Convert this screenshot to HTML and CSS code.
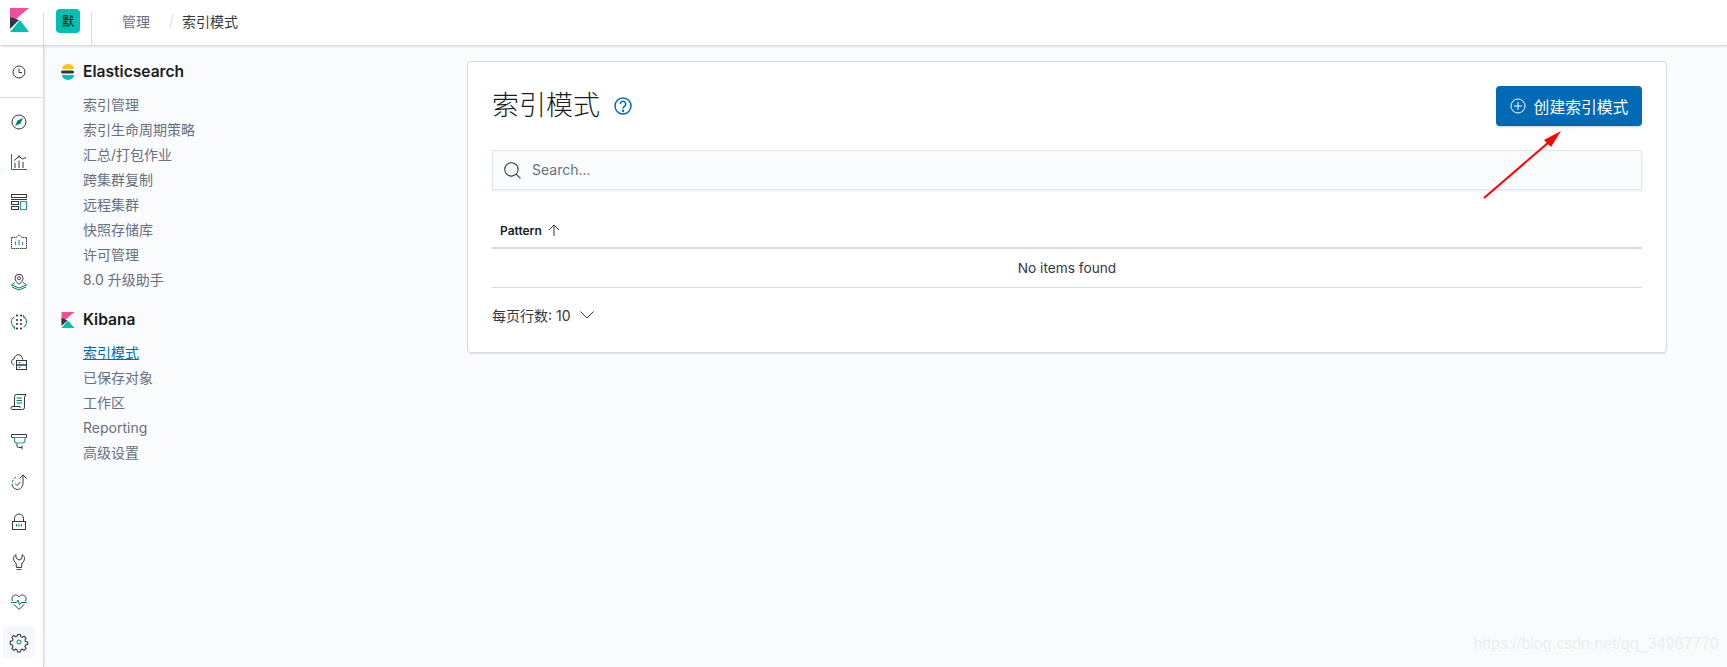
FILE: index.html
```html
<!DOCTYPE html>
<html lang="zh">
<head>
<meta charset="utf-8">
<title>索引模式</title>
<link rel="stylesheet" href="styles.css">
</head>
<body>
<header class="topbar">
  <div class="logo-cell">
    <svg class="logo" viewBox="0 0 19 24" width="19" height="24"><path d="M0 0H19L0 16Z" fill="#f04e98"/><path d="M0 9 9 12 0 21Z" fill="#343741"/><path d="M10 12 19 24H0Z" fill="#00bfb3"/></svg>
  </div>
  <div class="space-cell"><span class="space-badge">默</span></div>
  <nav class="crumbs"><span class="crumb">管理</span><span class="crumb-sep"></span><span class="crumb-current">索引模式</span></nav>
</header>
<div class="body">
  <aside class="rail">
    <div class="rail-recent">
      <svg class="ri" viewBox="0 0 16 16"><circle cx="8" cy="8" r="6" class="d"/><path d="M8 4.500v4h3" class="d"/></svg>
    </div>
    <div class="rail-list">
      <span class="rail-item"><svg class="ri" viewBox="0 0 16 16"><circle cx="8" cy="8" r="7" class="d"/><path d="M12 4 9.500 9.500 4 12 6.500 6.500Z" class="tf"/></svg></span>
      <span class="rail-item"><svg class="ri" viewBox="0 0 16 16"><path d="M.5 0v15.500H16" class="t"/><path d="M3 6.500 8 2.500l3.500 2.500L15 3.500" class="d"/><circle cx="8" cy="2.500" r="1" class="dots"/><path d="M4 14V9M8 14V6.500M12 14V8" class="d"/></svg></span>
      <span class="rail-item"><svg class="ri" viewBox="0 0 16 16"><rect x=".5" y=".5" width="15" height="3" class="d"/><path d="M0 5.500h16" class="d"/><rect x=".5" y="7.500" width="7" height="3" class="d"/><rect x=".5" y="12.500" width="7" height="3" class="d"/><rect x="9.500" y="7.500" width="6" height="8" class="t2"/></svg></span>
      <span class="rail-item"><svg class="ri" viewBox="0 0 16 16"><path d="M.5 3.500h4.500L8 .8l3 2.700h4.500v11H.5Z" class="d" stroke-dasharray="1.600 .6"/><path d="M4.500 11V7.500M8 11V6M11.500 11V8" class="t2"/></svg></span>
      <span class="rail-item"><svg class="ri" viewBox="0 0 16 16"><path d="M8 10.500C6 8.500 4 6.500 4 4.300a4 4 0 0 1 8 0C12 6.500 10 8.500 8 10.500Z" class="d"/><circle cx="8" cy="4.300" r="1.500" class="d"/><path d="M4 8.500 .5 11 8 14l7.500-3L12 8.500M1 13l7 3 7-3" class="t"/></svg></span>
      <span class="rail-item"><svg class="ri" viewBox="0 0 16 16"><path d="M3.500 3C1 4 .5 6 .5 8s.8 4 3 5" class="t"/><path d="M12.500 3c2.500 1 3 3 3 5s-.8 4-3 5" class="t"/><path d="M1.500 12.800 3.800 13 3.500 15M14.500 3.200 12.300 3l.3-2" class="t"/><g class="dots"><circle cx="6" cy="1.500" r="1.100"/><circle cx="10" cy="1.500" r="1.100"/><circle cx="6" cy="6" r="1.100"/><circle cx="10" cy="6" r="1.100"/><circle cx="6" cy="10" r="1.100"/><circle cx="10" cy="10" r="1.100"/><circle cx="6" cy="14.500" r="1.100"/><circle cx="10" cy="14.500" r="1.100"/></g></svg></span>
      <span class="rail-item"><svg class="ri" viewBox="0 0 16 16"><path d="M3 11C1 10.500.5 9 .5 7.800.5 6.300 1.500 5 3 5c.5-2.800 2.500-4.300 4.500-4.300S11 2 11.800 5.500" class="d"/><rect x="5.500" y="6.500" width="10" height="4.500" class="d"/><rect x="5.500" y="11" width="10" height="4.500" class="d"/><path d="M7.500 8.700h2M7.500 13.200h2" class="t"/></svg></span>
      <span class="rail-item"><svg class="ri" viewBox="0 0 16 16"><path d="M3.500 13V2.500a2 2 0 0 1 2-2H15l-1.500 2.500v10.500a2 2 0 0 1-2 2h-9.500A1.500 1.500 0 0 1 1 12.500h8V14" class="d"/><path d="M5.500 4h5.500M5.500 6.500h5.500M5.500 9h5.500" class="t"/></svg></span>
      <span class="rail-item"><svg class="ri" viewBox="0 0 16 16"><path d="M.5 3V.5h15V3M3.500 3.500H.5M15.500 3.500h-3" class="d"/><path d="M3.500 3.500h10.500V6.500a2.500 2.500 0 0 1-2.500 2.500H6A2.500 2.500 0 0 1 3.500 6.500Z" class="t2"/><path d="M6 9.500v2.500a1.500 1.500 0 0 0 1.500 1.500h3.500M11 11.500V15.500" class="d"/></svg></span>
      <span class="rail-item"><svg class="ri" viewBox="0 0 16 16"><path d="M1.500 8.500a5.500 5.500 0 0 1 5-5.500" class="t" stroke-dasharray="2.500 1.300"/><path d="M1 10c0 3 2.500 5.500 5.500 5.500S12 13 12 9V1" class="d"/><path d="M8.500 4.500 12 .8l3.500 3.700M4 9.500l2 2 3.500-3.500" class="d"/></svg></span>
      <span class="rail-item"><svg class="ri" viewBox="0 0 16 16"><path d="M3.500 7V4.500a4.500 4.500 0 0 1 9 0V7" class="d"/><rect x="1.500" y="7.500" width="13" height="8" class="d"/><path d="M5.500 10v2.500M8 10v3M10.500 10v2.500" class="t"/></svg></span>
      <span class="rail-item"><svg class="ri" viewBox="0 0 16 16"><path d="M5 .8C3 1.500 2.500 3 2.500 4.500c0 2 1.200 3.500 2.500 4.500l.5 4.500h5l.5-4.500c1.300-1 2.500-2.500 2.500-4.500 0-1.500-.5-3-2.500-3.700v3.700L8 6 5 4Z" class="d"/><path d="M5.500 15.500h5" class="t"/></svg></span>
      <span class="rail-item"><svg class="ri" viewBox="0 0 16 16"><path d="M1.500 7C0 4 2 1 4.500 1c1.500 0 2.800.8 3.500 2 .7-1.200 2-2 3.500-2C14 1 16 4 14.500 7M3 10.500l5 5 5-5" class="d"/><path d="M0 8.500h5.500L7 6l1.500 5L10 8.500h6" class="t"/></svg></span>
      <span class="rail-item rail-item-active"><svg class="ri" viewBox="0 0 16 16"><path d="M6.700 1h2.600l.4 2 1.500.6 1.700-1.100 1.800 1.800-1.100 1.700.6 1.500 2 .4v2.600l-2 .4-.6 1.500 1.100 1.700-1.800 1.800-1.700-1.100-1.500.6-.4 2H6.700l-.4-2-1.500-.6-1.700 1.100-1.800-1.800 1.100-1.700-.6-1.500-2-.4V7.300l2-.4.6-1.500L1.300 3.700l1.800-1.800 1.700 1.100 1.500-.6Z" class="d" transform="translate(-.5 -.5) scale(1.060)"/><circle cx="8" cy="8" r="2" class="t"/></svg></span>
    </div>
  </aside>
  <aside class="sidenav">
    <h2 class="group-title">
      <svg class="group-icon" viewBox="0 0 16 16"><path d="M2 5a6 5 0 0 1 12 0Z" fill="#fec514"/><rect x="1" y="6.500" width="13" height="3" rx="1.500" fill="#343741"/><path d="M2 11h12a6 5 0 0 1-12 0Z" fill="#00bfb3"/></svg>
      Elasticsearch</h2>
    <ul class="links">
      <li>索引管理</li><li>索引生命周期策略</li><li>汇总/打包作业</li><li>跨集群复制</li><li>远程集群</li><li>快照存储库</li><li>许可管理</li><li>8.0 升级助手</li>
    </ul>
    <h2 class="group-title group-second">
      <svg class="group-icon" viewBox="0 0 13 16"><path d="M0 0H13L0 11Z" fill="#f04e98"/><path d="M0 6 6 8.500 0 14Z" fill="#343741"/><path d="M6.500 8.500 13 16H0Z" fill="#00bfb3"/></svg>
      Kibana</h2>
    <ul class="links">
      <li class="link-active">索引模式</li><li>已保存对象</li><li>工作区</li><li>Reporting</li><li>高级设置</li>
    </ul>
  </aside>
  <main class="main">
    <section class="panel">
      <div class="panel-head">
        <div class="title-wrap">
          <h1 class="title">索引模式</h1>
          <svg class="help" viewBox="0 0 18 18"><circle cx="9" cy="9" r="8" /><path d="M6.300 7a2.700 2.700 0 1 1 4.200 2.300C9.500 10 9 10.300 9 11.500"/><circle cx="9" cy="13.700" r=".5"/></svg>
        </div>
        <button class="create-btn"><svg class="plus" viewBox="0 0 16 16"><circle cx="8" cy="8" r="7"/><path d="M8 4v8M4 8h8"/></svg>创建索引模式</button>
      </div>
      <div class="search">
        <svg class="search-icon" viewBox="0 0 16 16"><circle cx="7" cy="7" r="6.300"/><path d="M11.500 11.500 15.500 15.500"/></svg>
        <span class="search-ph">Search...</span>
      </div>
      <div class="th"><span class="th-label">Pattern</span><svg class="sort" viewBox="0 0 12 12"><path d="M6 12V1M1 6l5-5 5 5"/></svg></div>
      <div class="empty">No items found</div>
      <div class="pager">每页行数: 10<svg class="chev" viewBox="0 0 14 8"><path d="M.5.500 7 7 13.500.5"/></svg></div>
    </section>
  </main>
</div>
<svg class="arrow" viewBox="0 0 90 80" width="90" height="80"><path d="M3 77 68 21" stroke="#f00" stroke-width="2" fill="none"/><path d="M80 10 63 19 70 26Z" fill="#f00"/></svg>
<div class="watermark">https://blog.csdn.net/qq_34967770</div>
</body>
</html>
```
FILE: styles.css
```css
* { box-sizing: border-box; }
html, body { margin: 0; height: 100%; }
body {
  font-family: Inter, "Noto Sans CJK SC", sans-serif;
  font-size: 14px;
  color: #343741;
  background: #fafbfd;
  position: relative;
  overflow: hidden;
  height: 667px;
}
.topbar {
  height: 46px;
  display: flex;
  align-items: center;
  background: #fff;
  border-bottom: 1px solid #d3dae6;
  box-shadow: 0 2px 2px -1px rgba(152, 162, 179, .3);
  position: relative;
  z-index: 2;
}
.logo-cell { width: 44px; height: 46px; display: flex; padding: 8px 0 0 10px; position: relative; }
.logo-cell::after { content: ""; position: absolute; right: 0; top: 13px; height: 32px; width: 1px; background: #d3dae6; }
.logo { display: block; }
.space-cell { width: 48px; height: 46px; padding: 9px 0 0 12px; position: relative; }
.space-cell::after { content: ""; position: absolute; right: 0; top: 13px; height: 32px; width: 1px; background: #d3dae6; }
.space-badge {
  display: flex; width: 24px; height: 24px; border-radius: 4px;
  background: #00bfb3; color: #000; font-size: 12px;
  align-items: center; justify-content: center;
}
.crumbs { display: flex; align-items: center; padding: 0 0 3px 30px; font-size: 14px; height: 44px; }
.crumb { color: #69707d; }
.crumb-sep { width: 1px; height: 14px; background: #d3dae6; transform: rotate(15deg); margin: 0 10px 0 21px; }
.crumb-current { color: #343741; }
.body { display: flex; height: 621px; }
.rail {
  width: 44px; flex: none; background: #fff;
  border-right: 1px solid #d3dae6;
  box-shadow: 1px 0 2px rgba(152, 162, 179, .2);
  display: flex; flex-direction: column;
}
.rail-recent { height: 52px; display: flex; align-items: center; justify-content: center; border-bottom: 1px solid #d3dae6; padding: 0 5px 0 0; }
.rail-list { display: flex; flex-direction: column; align-items: center; padding: 4px 5px 0 0; }
.rail-item { width: 32px; height: 40px; display: flex; align-items: center; justify-content: center; }
.rail-item-active { height: 32px; margin-top: 4px; background: #f5f7fa; border-radius: 4px; }
.ri { width: 16px; height: 16px; display: block; overflow: visible; }
.ri .d { fill: none; stroke: #343741; stroke-width: 1; }
.ri .t { fill: none; stroke: #017d73; stroke-width: 1; }
.ri .t2 { fill: none; stroke: #2a9d92; stroke-width: 1.200; }
.ri .tf { fill: #017d73; stroke: none; }
.ri .dots { fill: #343741; }
.sidenav { width: 423px; flex: none; padding: 14px 0 0 16px; }
.group-title { margin: 0; display: flex; align-items: center; font-size: 15.600px; font-weight: 600; color: #1a1c21; height: 24px; line-height: 24px; margin-bottom: 8px; }
.group-second { margin-top: 16px; margin-bottom: 8px; }
.group-icon { width: 16px; height: 16px; margin-right: 7px; flex: none; }
.links { list-style: none; margin: 0; padding: 0 0 0 23px; }
.links li { height: 25px; line-height: 25px; font-size: 14px; color: #69707d; white-space: nowrap; }
.link-active { color: #006bb4 !important; text-decoration: underline; }
.main { flex: 1; padding: 15px 60px 0 0; min-width: 0; }
.panel {
  background: #fff; border: 1px solid #d3dae6; border-radius: 4px;
  box-shadow: 0 2px 2px -1px rgba(152, 162, 179, .3);
  padding: 24px;
  height: 292px;
}
.panel-head { display: flex; justify-content: space-between; align-items: flex-start; height: 64px; }
.title-wrap { display: flex; align-items: center; height: 40px; }
.title { margin: 0; font-size: 27px; font-weight: 300; line-height: 40px; color: #1a1c21; }
.help { width: 18px; height: 18px; margin-left: 14px; fill: none; stroke: #006bb4; stroke-width: 1.500; }
.create-btn {
  width: 146px; height: 40px; display: flex; align-items: center; justify-content: center;
  background: #006bb4; color: #fff; border: 0; border-radius: 4px;
  font: inherit; font-size: 15.800px; padding: 0;
  box-shadow: 0 2px 2px -1px rgba(54, 97, 126, .3);
}
.plus { width: 16px; height: 16px; margin-right: 8px; fill: none; stroke: #fff; stroke-width: 1; }
.search {
  height: 40px; display: flex; align-items: center;
  background: #fafbfd; border: 1px solid #e4e7ed;
  box-shadow: 0 1px 2px rgba(152, 162, 179, .25);
  padding-left: 11px;
}
.search-icon { width: 17px; height: 17px; fill: none; stroke: #343741; stroke-width: 1; margin-right: 11px; }
.search-ph { color: #69707d; font-size: 14px; position: relative; top: -1px; }
.th { margin-top: 23px; height: 36px; display: flex; align-items: center; padding-left: 8px; border-bottom: 2px solid #d3dae6; font-size: 12px; font-weight: 600; color: #1a1c21; }
.th-label { margin-right: 6px; }
.sort { width: 12px; height: 12px; fill: none; stroke: #343741; stroke-width: 1; }
.empty { height: 39px; display: flex; align-items: center; justify-content: center; border-bottom: 1px solid #d3dae6; font-size: 13.700px; color: #343741; padding-bottom: 1px; }
.pager { display: flex; align-items: center; height: 53px; font-size: 14px; color: #343741; }
.chev { width: 14px; height: 8px; margin-left: 9px; fill: none; stroke: #343741; stroke-width: 1; }
.arrow { position: absolute; left: 1481px; top: 121px; }
.watermark { position: absolute; right: 8px; bottom: 14px; font-family: "Liberation Sans", sans-serif; font-size: 16px; color: #eceef1; }
```
